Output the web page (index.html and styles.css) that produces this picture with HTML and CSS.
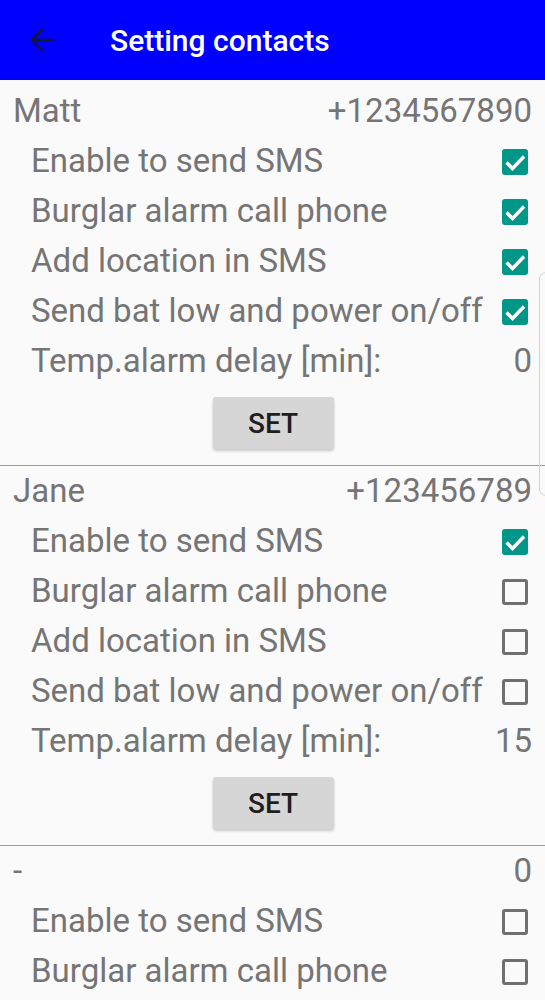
FILE: index.html
```html
<!DOCTYPE html>
<html lang="en">
  <head>
    <meta charset="UTF-8" />
    <meta name="viewport" content="width=device-width, initial-scale=1.0" />
    <title>Setting contacts</title>
    <link rel="stylesheet" href="styles.css">
  </head>
  <body>
    <header class="toolbar">
      <svg class="back" viewBox="0 0 24 24" width="36" height="36">
        <path d="M20 12H5.5M12.5 4.8L5.3 12l7.2 7.2" />
      </svg>
      <h1>Setting contacts</h1>
    </header>

    <div class="list">
      <section class="contact">
        <div class="contact-head"><span>Matt</span><span>+1234567890</span></div>
        <div class="option"><span>Enable to send SMS</span><span class="check on"></span></div>
        <div class="option"><span>Burglar alarm call phone</span><span class="check on"></span></div>
        <div class="option"><span>Add location in SMS</span><span class="check on"></span></div>
        <div class="option"><span>Send bat low and power on/off</span><span class="check on"></span></div>
        <div class="option delay"><span>Temp.alarm delay [min]:</span><span>0</span></div>
        <div class="actions"><button>SET</button></div>
      </section>

      <section class="contact">
        <div class="contact-head"><span>Jane</span><span>+123456789</span></div>
        <div class="option"><span>Enable to send SMS</span><span class="check on"></span></div>
        <div class="option"><span>Burglar alarm call phone</span><span class="check"></span></div>
        <div class="option"><span>Add location in SMS</span><span class="check"></span></div>
        <div class="option"><span>Send bat low and power on/off</span><span class="check"></span></div>
        <div class="option delay"><span>Temp.alarm delay [min]:</span><span>15</span></div>
        <div class="actions"><button>SET</button></div>
      </section>

      <section class="contact last">
        <div class="contact-head"><span>-</span><span>0</span></div>
        <div class="option"><span>Enable to send SMS</span><span class="check"></span></div>
        <div class="option"><span>Burglar alarm call phone</span><span class="check"></span></div>
      </section>

      <div class="scroll-thumb"></div>
    </div>
  </body>
</html>
```

FILE: styles.css
```css
body {
  margin: 0;
  background-color: #fafafa;
  font-family: Roboto, "Liberation Sans", sans-serif;
  overflow: hidden;
}

.toolbar {
  display: flex;
  align-items: center;
  height: 80px;
  background-color: #0000ff;
}

.back {
  margin-left: 24px;
  fill: none;
  stroke: #141433;
  stroke-width: 1.6;
}

.toolbar h1 {
  margin: 0 0 0 50px;
  font-size: 30px;
  font-weight: 500;
  color: #fff;
}

.list {
  position: relative;
  padding-top: 6px;
}

.contact {
  border-bottom: 1px solid #9c9c9c;
}

.contact.last {
  border-bottom: none;
}

.contact-head,
.option {
  display: flex;
  justify-content: space-between;
  align-items: center;
  font-size: 33px;
  color: #757575;
}

.contact-head {
  height: 49px;
  padding: 0 13px;
}

.option {
  height: 50px;
  padding: 0 17px 0 31px;
}

.option.delay {
  padding-right: 13px;
}

.check {
  box-sizing: border-box;
  width: 26px;
  height: 26px;
  margin-top: 3px;
  border: 3px solid #707070;
  border-radius: 3px;
}

.check.on {
  border: none;
  background-color: #009688;
  background-image: url("data:image/svg+xml,%3Csvg xmlns='http://www.w3.org/2000/svg' viewBox='0 0 26 26'%3E%3Cpath d='M4.5 13.5l6 6L22 7.5' fill='none' stroke='white' stroke-width='3.4'/%3E%3C/svg%3E");
}

.actions {
  display: flex;
  justify-content: center;
  padding: 12px 0 16px;
}

.actions button {
  width: 121px;
  height: 52px;
  margin-left: 1px;
  border: none;
  border-radius: 3px;
  background-color: #d6d6d6;
  box-shadow: 0 2px 3px rgba(0, 0, 0, 0.2);
  font-family: Roboto, "Liberation Sans", sans-serif;
  font-size: 28px;
  font-weight: 500;
  color: #1e1e1e;
}

.scroll-thumb {
  position: absolute;
  top: 192px;
  left: 539px;
  width: 14px;
  height: 222px;
  border: 1px solid #d4d4d4;
  border-radius: 7px;
}
```
